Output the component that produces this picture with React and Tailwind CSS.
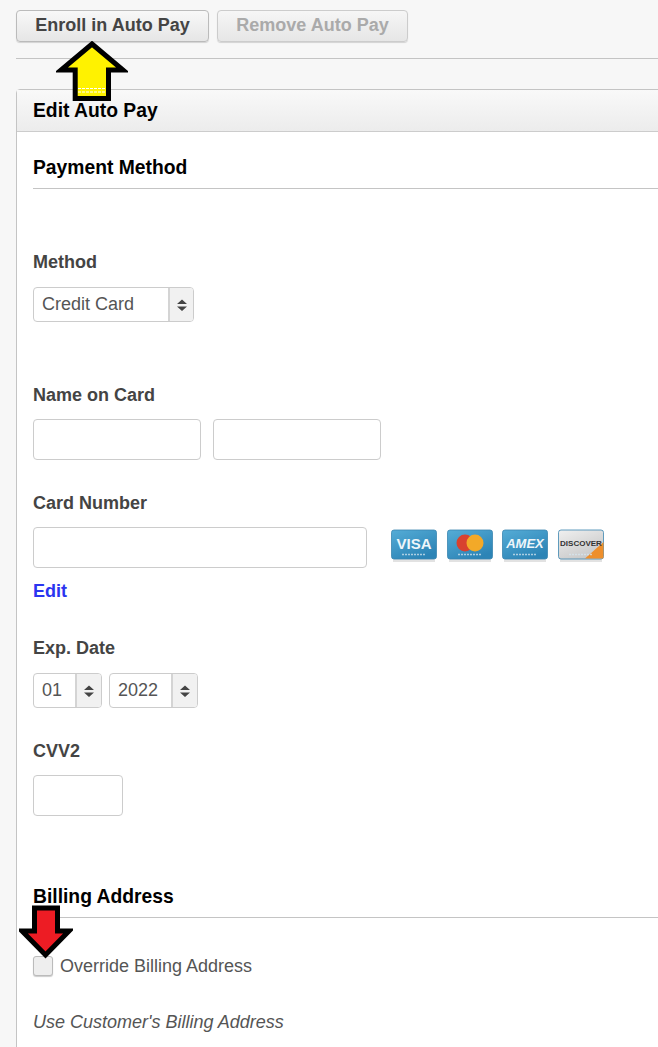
// App.jsx
// Edit Auto Pay form with annotation arrows over the buttons and checkbox.

function Spinner({ className }) {
  return (
    <span className={`flex items-center justify-center border-l-2 border-[#d4d4d4] bg-[#f1f1f1] ${className}`}>
      <svg width="12" height="16" viewBox="0 0 12 16">
        <path d="M6 2.5 L11 7 H1 Z M1 9.5 H11 L6 14 Z" fill="#444" />
      </svg>
    </span>
  );
}

function Select({ value, textWidth, spinWidth, className = "" }) {
  return (
    <div className={`flex h-[35px] overflow-hidden rounded-[4px] border border-[#ccc] bg-white ${className}`}>
      <span className={`pl-2 text-[18px] leading-[32px] text-[#555] ${textWidth}`}>{value}</span>
      <Spinner className={spinWidth} />
    </div>
  );
}

function Label({ children, className = "" }) {
  return <div className={`text-[18px] leading-[24px] font-bold text-[#444] ${className}`}>{children}</div>;
}

function TextBox({ className }) {
  return <div className={`h-[41px] rounded-[4px] border border-[#ccc] bg-white ${className}`} />;
}

function CardIcon({ id, from, to, children }) {
  return (
    <svg width="46" height="34" viewBox="0 0 46 34" className="shrink-0">
      <defs>
        <linearGradient id={id} x1="0" y1="0" x2="0.6" y2="1">
          <stop offset="0" stopColor={from} />
          <stop offset="1" stopColor={to} />
        </linearGradient>
      </defs>
      <rect x="2" y="30" width="42" height="3" fill="#e2e2e2" />
      <rect x="0.5" y="1" width="45" height="29" rx="2.5" fill={`url(#${id})`} stroke="#3b86b0" strokeOpacity="0.8" />
      {children}
      <path d="M11 25.5 H35" stroke="#d6e6ef" strokeOpacity="0.75" strokeWidth="1.5" strokeDasharray="2 1" />
    </svg>
  );
}

const cardFont = { fontFamily: '"Liberation Sans", Arial, sans-serif', fontWeight: 700 };

function Cards() {
  return (
    <div className="ml-[24px] flex gap-[9.5px] pt-[2px]">
      <CardIcon id="visa" from="#55acd6" to="#2c84b6">
        <text x="23" y="20" textAnchor="middle" fontSize="15" fill="#eef6fa" style={cardFont}>VISA</text>
      </CardIcon>
      <CardIcon id="mc" from="#55acd6" to="#2c84b6">
        <circle cx="18" cy="14" r="8.5" fill="#d8412f" />
        <circle cx="28" cy="14" r="8.5" fill="#f3a928" />
      </CardIcon>
      <CardIcon id="amex" from="#55acd6" to="#2c84b6">
        <text x="23" y="19" textAnchor="middle" fontSize="13" fill="#eef6fa" style={{ ...cardFont, fontStyle: "italic" }}>AMEX</text>
      </CardIcon>
      <CardIcon id="disc" from="#f0f0f0" to="#c8c8c8">
        <path d="M27 29.5 L45.5 13 V28 Q45.5 29.5 44.5 29.5 Z" fill="#ee8f2c" />
        <text x="23" y="17" textAnchor="middle" fontSize="8" fill="#333" style={cardFont}>DISCOVER</text>
      </CardIcon>
    </div>
  );
}

export default function App() {
  return (
    <div className="relative h-[1047px] overflow-hidden bg-[#f7f7f7] pt-[10px] pl-4 font-['Liberation_Sans',Arial,sans-serif]">
      <div className="flex gap-2">
        <button className="h-8 w-[193px] rounded-[4px] border border-[#bbb] bg-gradient-to-b from-[#f8f8f8] to-[#e6e6e6] pb-[2px] text-center text-[18px] font-bold text-[#444] shadow-[0_1px_1px_rgba(0,0,0,0.15)]">
          Enroll in Auto Pay
        </button>
        <button className="h-8 w-[191px] rounded-[4px] border border-[#ccc] bg-gradient-to-b from-[#f6f6f6] to-[#e6e6e6] pb-[2px] text-center text-[18px] font-bold text-[#aaa] shadow-[0_1px_1px_rgba(0,0,0,0.15)]">
          Remove Auto Pay
        </button>
      </div>

      <div className="mt-4 h-px bg-[#c4c4c4]" />

      <div className="mt-[30px] h-[1000px] w-[700px] rounded-t-[4px] border border-[#c4c4c4] bg-white">
        <div className="h-[42px] border-b border-[#ccc] bg-gradient-to-b from-[#f9f9f9] to-[#ececec] pl-4 text-[19.3px] leading-[41px] font-bold text-black">
          Edit Auto Pay
        </div>

        <div className="pl-4">
          <h3 className="mt-[23px] text-[19.3px] leading-[26px] font-bold text-black">Payment Method</h3>
          <div className="mt-[7px] h-px bg-[#c4c4c4]" />

          <Label className="mt-[61px]">Method</Label>
          <Select value="Credit Card" textWidth="w-[134px]" spinWidth="w-[25px]" className="mt-[13px] w-[161px]" />

          <Label className="mt-[61px]">Name on Card</Label>
          <div className="mt-3 flex gap-3">
            <TextBox className="w-[168px]" />
            <TextBox className="w-[168px]" />
          </div>

          <Label className="mt-[31px]">Card Number</Label>
          <div className="mt-3 flex">
            <TextBox className="w-[334px]" />
            <Cards />
          </div>
          <div className="mt-[11px] text-[18px] leading-[24px] font-bold text-[#2a35f0]">Edit</div>

          <Label className="mt-[33px]">Exp. Date</Label>
          <div className="mt-[13px] flex gap-[7px]">
            <Select value="01" textWidth="w-[41px]" spinWidth="w-[26px]" className="w-[69px]" />
            <Select value="2022" textWidth="w-[61px]" spinWidth="w-[26px]" className="w-[89px]" />
          </div>

          <Label className="mt-[31px]">CVV2</Label>
          <TextBox className="mt-3 w-[90px]" />

          <h3 className="mt-[68px] text-[19.3px] leading-[26px] font-bold text-black">Billing Address</h3>
          <div className="mt-[7px] h-px bg-[#c4c4c4]" />

          <label className="mt-[36px] flex items-center gap-[7px] text-[18px] leading-[24px] text-[#555]">
            <span className="h-[20px] w-[20px] rounded-[3px] border border-[#bbb] bg-[#eee] shadow-[0_1px_1px_rgba(0,0,0,0.2)]" />
            Override Billing Address
          </label>
          <div className="mt-[32px] text-[18px] leading-[24px] text-[#555] italic">Use Customer's Billing Address</div>
        </div>
      </div>

      {/* annotation arrows */}
      <svg className="absolute top-[41px] left-[56px]" width="72" height="60" viewBox="0 0 72 60">
        <path d="M36 3 L67 29 H52.5 V57.5 H19.2 V29 H5 Z" fill="#fff200" stroke="#000" strokeWidth="5" strokeLinejoin="miter" />
        <path d="M22 47.5 H50 M22 51 H50" stroke="#fff" strokeWidth="1" strokeDasharray="3 1" />
      </svg>
      <svg className="absolute top-[905px] left-[19px]" width="54" height="54" viewBox="0 0 54 54">
        <path d="M15.5 3 H38.5 V26 H50 L26.5 50 L3 26 H15.5 Z" fill="#ed1c24" stroke="#000" strokeWidth="5" strokeLinejoin="miter" />
      </svg>
    </div>
  );
}
